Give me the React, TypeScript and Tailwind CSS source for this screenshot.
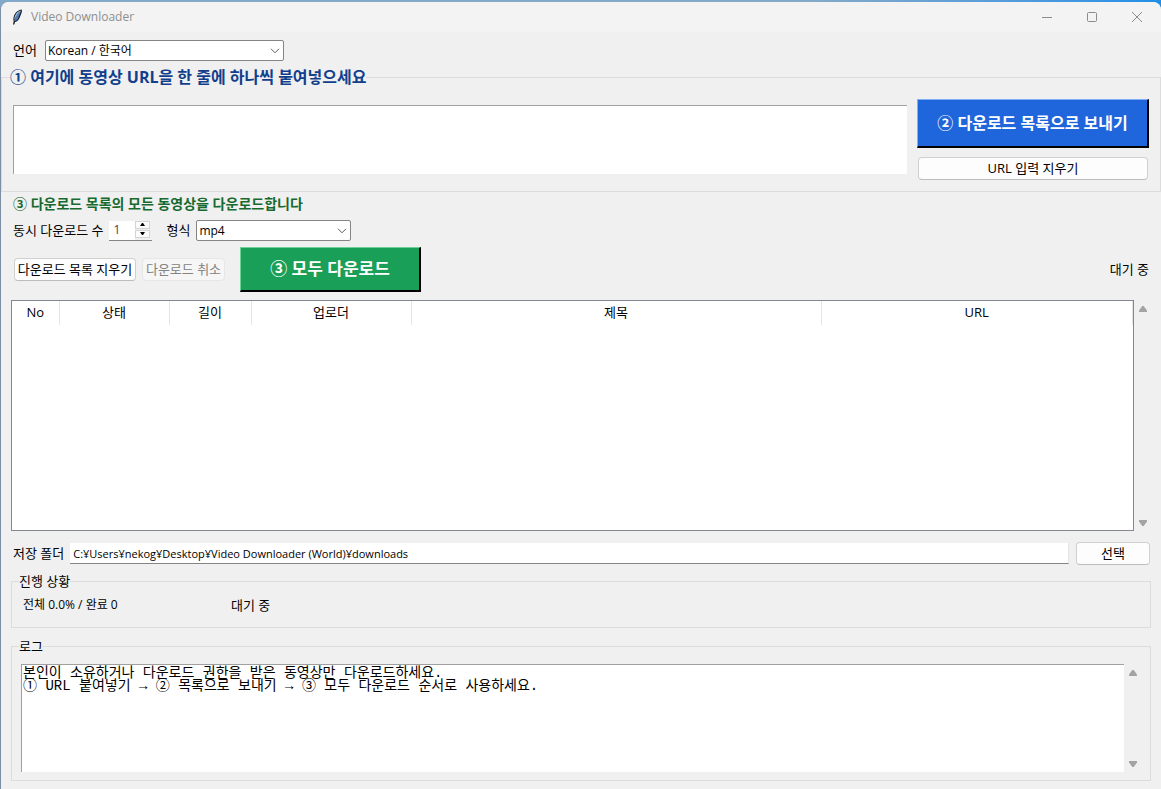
import { useState } from "react";
import type { ReactNode } from "react";

const columns = [
  { label: "No", width: "w-[47px]" },
  { label: "상태", width: "w-[110px]" },
  { label: "길이", width: "w-[82px]" },
  { label: "업로더", width: "w-[160px]" },
  { label: "제목", width: "w-[410px]" },
  { label: "URL", width: "w-auto" },
];

const logText =
  "본인이 소유하거나 다운로드 권한을 받은 동영상만 다운로드하세요.\n① URL 붙여넣기 → ② 목록으로 보내기 → ③ 모두 다운로드 순서로 사용하세요.";

function FeatherIcon() {
  return (
    <svg viewBox="0 0 16 16" className="size-4" aria-hidden="true">
      <path d="M12.800.4C9.800.7 6.500 3 5.200 6.200c-.9 2.200-1 4.300-.5 6L4 15.600h1.300L6 13c2.200-.5 3.900-2.300 4.800-4.800C11.800 5.400 13.400 3 12.800.4Z" fill="#101318" />
      <path d="M11.900 1.300C9.400 1.900 7.100 4.200 6.100 6.600c-.7 1.700-.9 3.300-.7 4.600C6.800 7.800 9 4.200 11.900 1.300Z" fill="#8fc0f2" />
      <path d="M11.900 2C9.600 4.800 7.400 8.600 6.400 11.900c1.600-.6 2.700-2 3.300-4C10.500 5.600 11.900 3.800 11.900 2Z" fill="#3f7fd0" />
      <path d="M11.700 1.800C9 5 6.900 8.600 5.700 12.200" fill="none" stroke="#e6f0fb" strokeWidth="0.500" />
    </svg>
  );
}

function Arrow({ up = false }: { up?: boolean }) {
  return (
    <svg viewBox="0 0 8 6" className="h-1.5 w-2" aria-hidden="true">
      <path d={up ? "M3.300 0h1.400L8 4.500V6H0V4.500Z" : "M0 0h8v1.500L4.700 6H3.300L0 1.500Z"} fill="#a3a3a3" />
    </svg>
  );
}

function Scrollbar() {
  return (
    <div className="flex w-[17px] shrink-0 flex-col justify-between pt-1 pb-[3px]">
      <button type="button" aria-label="위로" className="flex h-2.5 items-center justify-center">
        <Arrow up />
      </button>
      <button type="button" aria-label="아래로" className="flex h-2.5 items-center justify-center">
        <Arrow />
      </button>
    </div>
  );
}

function Combo({ id, children, className }: { id: string; children: ReactNode; className: string }) {
  return (
    <div className={`grid items-center ${className}`}>
      <select
        id={id}
        className="col-start-1 row-start-1 h-[21px] w-full appearance-none rounded-xs border border-[#858585] bg-white pl-0.5 text-[12px] leading-4"
      >
        {children}
      </select>
      <svg viewBox="0 0 10 6" className="pointer-events-none col-start-1 row-start-1 mr-1 h-1.5 w-2.5 justify-self-end" aria-hidden="true">
        <path d="m1 .8 4 4 4-4" fill="none" stroke="#5c5c5c" />
      </svg>
    </div>
  );
}

function PlainButton({ children, className = "", disabled = false }: { children: ReactNode; className?: string; disabled?: boolean }) {
  return (
    <button
      type="button"
      disabled={disabled}
      className={`h-[23px] rounded border border-[#d0d0d0] border-b-[#bcbcbc] bg-[#fdfdfd] pb-0.5 text-[13px] leading-4 whitespace-nowrap disabled:border-[#e6e6e6] disabled:bg-[#f6f6f6] disabled:text-[#838383] ${className}`}
    >
      {children}
    </button>
  );
}

export default function App() {
  const [urls, setUrls] = useState("");
  const [parallel, setParallel] = useState(1);
  const [folder, setFolder] = useState("C:¥Users¥nekog¥Desktop¥Video Downloader (World)¥downloads");

  return (
    <div className="flex min-h-screen flex-col bg-linear-to-r from-[#83a9c8] from-70% to-[#1d8fe8] pt-0.5 font-['Open_Sans','Noto_Sans_CJK_KR',sans-serif] text-[13px] leading-4 text-black">
      <main className="flex grow flex-col rounded-t-lg border-l border-[#7c8fa5] bg-[#f0f0f0]">
        <header className="flex h-[30px] items-center rounded-t-lg bg-[#f3f3f3] pr-px pl-2">
          <FeatherIcon />
          <h1 className="ml-1.5 grow text-[12px] text-[#8f8f8f]">Video Downloader</h1>
          <button type="button" aria-label="최소화" className="flex w-[45px] justify-center">
            <svg viewBox="0 0 12 12" className="size-3" aria-hidden="true">
              <path d="M1 6.500h10" stroke="#8c8c8c" />
            </svg>
          </button>
          <button type="button" aria-label="최대화" className="flex w-[45px] justify-center">
            <svg viewBox="0 0 12 12" className="size-3" aria-hidden="true">
              <rect x="1.500" y="1.500" width="9" height="9" rx="1" fill="none" stroke="#8c8c8c" />
            </svg>
          </button>
          <button type="button" aria-label="닫기" className="flex w-[46px] justify-center">
            <svg viewBox="0 0 12 12" className="size-3" aria-hidden="true">
              <path d="m1 1 10 10M11 1 1 11" stroke="#8c8c8c" />
            </svg>
          </button>
        </header>

        <div className="flex items-center gap-2 px-3 pt-2">
          <label htmlFor="language" className="pb-0.5">언어</label>
          <Combo id="language" className="w-[239px]">
            <option>Korean / 한국어</option>
          </Combo>
        </div>

        <fieldset className="mt-1.5 border border-[#dcdcdc] px-2 pb-[11px]">
          <legend className="text-[16px] leading-5 font-bold text-[#123f8c]">
            <label htmlFor="urls">① 여기에 동영상 URL을 한 줄에 하나씩 붙여넣으세요</label>
          </legend>
          <div className="flex items-start gap-2.5 px-[3px] pt-3">
            <textarea
              id="urls"
              value={urls}
              onChange={(e) => setUrls(e.target.value)}
              className="mt-1.5 block h-[69px] min-w-0 grow resize-none border-t border-l border-[#a0a0a0] bg-white px-0.5 outline-none"
            />
            <div className="flex w-[232px] shrink-0 flex-col gap-[9px]">
              <button
                type="button"
                className="h-[49px] border-t border-r-2 border-b-2 border-l border-t-[#7fb0f5] border-r-black border-b-black border-l-[#7fb0f5] bg-[#1f65db] text-[16px] font-bold whitespace-nowrap text-white"
              >
                ② 다운로드 목록으로 보내기
              </button>
              <PlainButton className="mx-px">URL 입력 지우기</PlainButton>
            </div>
          </div>
        </fieldset>

        <h2 className="mt-0.5 px-3 text-[14px] leading-5 font-bold text-[#166a2f]">③ 다운로드 목록의 모든 동영상을 다운로드합니다</h2>

        <div className="mt-1.5 flex items-center px-3">
          <label htmlFor="parallel" className="pb-0.5">동시 다운로드 수</label>
          <div className="ml-1.5 flex h-5 w-[43px] border-b border-[#858585] bg-white">
            <input
              id="parallel"
              type="number"
              min={1}
              value={parallel}
              onChange={(e) => setParallel(Number(e.target.value))}
              className="w-0 min-w-0 grow appearance-none bg-white pl-1 text-[12px] text-[#444] outline-none [-moz-appearance:textfield] [&::-webkit-inner-spin-button]:appearance-none"
            />
            <div className="flex w-[17px] shrink-0 flex-col gap-px bg-[#f0f0f0] pr-0.5 pb-0.5">
              <button type="button" aria-label="늘리기" onClick={() => setParallel(parallel + 1)} className="flex grow items-center justify-center border border-[#d4d4d4] bg-[#fbfbfb]">
                <svg viewBox="0 0 5 3" className="h-[3px] w-[5px]" aria-hidden="true">
                  <path d="M2 0h1l2 3H0Z" />
                </svg>
              </button>
              <button type="button" aria-label="줄이기" onClick={() => setParallel(Math.max(1, parallel - 1))} className="flex grow items-center justify-center border border-[#d4d4d4] bg-[#fbfbfb]">
                <svg viewBox="0 0 5 3" className="h-[3px] w-[5px]" aria-hidden="true">
                  <path d="M0 0h5L3 3H2Z" />
                </svg>
              </button>
            </div>
          </div>
          <label htmlFor="format" className="ml-3.5 pb-0.5">형식</label>
          <Combo id="format" className="ml-1.5 w-[155px]">
            <option>mp4</option>
          </Combo>
        </div>

        <div className="mt-1.5 flex items-center pr-3 pl-[13px]">
          <PlainButton className="w-[122px]">다운로드 목록 지우기</PlainButton>
          <PlainButton className="ml-1.5 w-[83px]" disabled>다운로드 취소</PlainButton>
          <button
            type="button"
            className="ml-[15px] h-[45px] w-[181px] border-t border-r-2 border-b-2 border-l border-t-[#6fd09a] border-r-black border-b-black border-l-[#6fd09a] bg-[#1a9f58] text-[17px] font-bold whitespace-nowrap text-white"
          >
            ③ 모두 다운로드
          </button>
          <output className="ml-auto pb-0.5">대기 중</output>
        </div>

        <section className="mt-2 flex min-h-[231px] grow pr-2.5 pl-2.5">
          <div className="min-w-0 grow border border-[#828790] bg-white">
            <table className="w-full table-fixed border-collapse">
              <thead>
                <tr className="h-6">
                  {columns.map((column) => (
                    <th key={column.label} scope="col" className={`border-r border-[#e5e5e5] pb-0.5 font-normal ${column.width}`}>
                      {column.label}
                    </th>
                  ))}
                </tr>
              </thead>
              <tbody />
            </table>
          </div>
          <Scrollbar />
        </section>

        <div className="mt-[11px] flex items-center pr-[11px] pl-3">
          <label htmlFor="folder" className="pb-0.5">저장 폴더</label>
          <input
            id="folder"
            value={folder}
            onChange={(e) => setFolder(e.target.value)}
            className="ml-1.5 h-[21px] min-w-0 grow border-r border-b border-r-[#e5e5e5] border-b-[#858585] bg-white pl-[3px] text-[11px] outline-none"
          />
          <PlainButton className="ml-[7px] w-[74px]">선택</PlainButton>
        </div>

        <fieldset className="mx-2.5 mt-2 border border-[#dcdcdc] px-[7px] pb-3.5">
          <legend>진행 상황</legend>
          <div className="grid grid-cols-[208px_1fr] px-1 pt-2">
            <output className="text-[12px]">전체 0.0% / 완료 0</output>
            <output>대기 중</output>
          </div>
        </fieldset>

        <fieldset className="mx-2.5 mt-2.5 mb-2 border border-[#dcdcdc] px-[7px] pb-2">
          <legend>
            <label htmlFor="log">로그</label>
          </legend>
          <div className="flex pt-2.5 pr-0.5 pl-0.5">
            <textarea
              id="log"
              readOnly
              value={logText}
              className="block h-[108px] min-w-0 grow resize-none border-t border-l border-[#a0a0a0] bg-white px-px pt-0.5 font-['Liberation_Mono','Noto_Sans_CJK_KR',monospace] text-[14px] leading-[13px] outline-none"
            />
            <Scrollbar />
          </div>
        </fieldset>
      </main>
    </div>
  );
}
